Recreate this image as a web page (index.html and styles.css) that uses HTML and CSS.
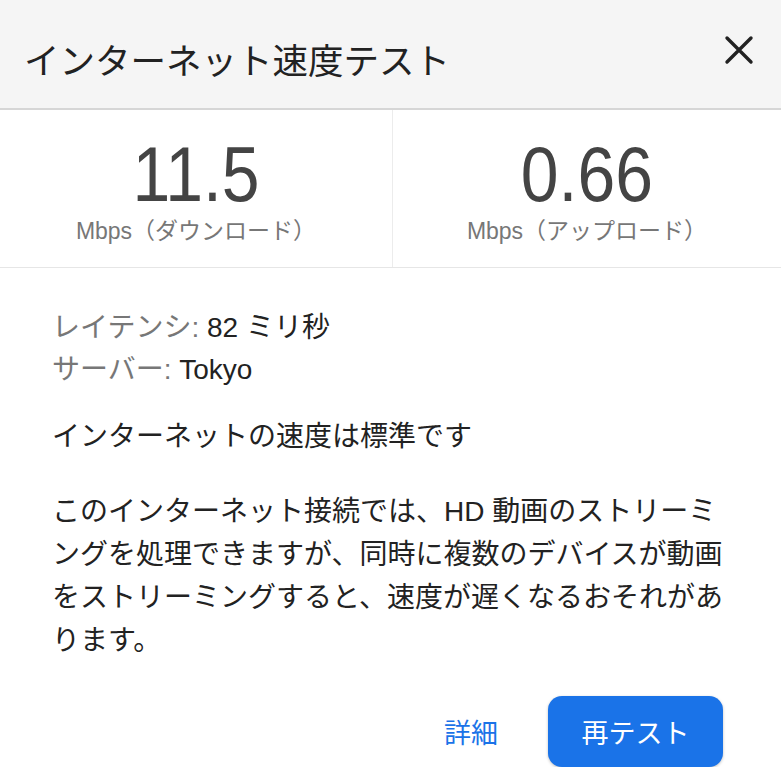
FILE: index.html
```html
<!DOCTYPE html>
<html lang="ja">
<head>
    <meta charset="UTF-8">
    <meta name="viewport" content="width=device-width, initial-scale=1.0">
    <title>インターネット速度テスト</title>
    <link rel="stylesheet" href="styles.css">
</head>
<body>

<div class="header">
    <h1 class="title">インターネット速度テスト</h1>
    <button class="close" aria-label="閉じる">
        <svg width="30" height="30" viewBox="0 0 30 30">
            <path d="M3 3 L27 27 M27 3 L3 27" stroke="#222" stroke-width="3.4" stroke-linecap="round" fill="none"/>
        </svg>
    </button>
</div>

<div class="metrics">
    <div class="metric">
        <div class="value">11.5</div>
        <div class="unit">Mbps（ダウンロード）</div>
    </div>
    <div class="metric">
        <div class="value">0.66</div>
        <div class="unit">Mbps（アップロード）</div>
    </div>
</div>

<div class="details">
    <div class="info">
        <div><span class="label">レイテンシ:</span> 82 ミリ秒</div>
        <div><span class="label">サーバー:</span> Tokyo</div>
    </div>
    <p class="summary">インターネットの速度は標準です</p>
    <p class="desc">このインターネット接続では、HD 動画のストリーミングを処理できますが、同時に複数のデバイスが動画をストリーミングすると、速度が遅くなるおそれがあります。</p>
</div>

<div class="actions">
    <a class="link" href="#">詳細</a>
    <button class="retest">再テスト</button>
</div>

</body>
</html>
```

FILE: styles.css
```css
body {
    margin: 0;
    width: 781px;
    background-color: #ffffff;
    color: #222;
    font-family: "Liberation Sans", Arial, "Noto Sans CJK JP", sans-serif;
}
.header {
    display: flex;
    align-items: center;
    justify-content: space-between;
    height: 108px;
    padding: 0 27px 0 24px;
    background-color: #f5f5f5;
    border-bottom: 2px solid #d6d6d6;
}
.title {
    margin: 8px 0 0 0;
    font-size: 35.5px;
    font-weight: normal;
    color: #222;
}
.close {
    display: flex;
    padding: 0;
    margin-top: -8px;
    background: none;
    border: none;
}
.metrics {
    display: flex;
    height: 157px;
    border-bottom: 1px solid #e6e6e6;
}
.metric {
    flex: 1;
    display: flex;
    flex-direction: column;
    align-items: center;
    padding-top: 20px;
}
.metric:first-child {
    flex: 0 0 392px;
    border-right: 1px solid #ececec;
}
.value {
    font-size: 78px;
    line-height: 88px;
    color: #444;
    transform: scaleX(0.87);
}
.unit {
    font-size: 23px;
    line-height: 27px;
    color: #777;
}
.details {
    padding: 39px 52px 0 52px;
    font-size: 28px;
}
.info {
    line-height: 42px;
}
.label {
    color: #777;
}
.summary {
    margin: 25px 0 0 0;
    line-height: 42px;
}
.desc {
    margin: 32px 0 0 0;
    line-height: 43px;
}
.actions {
    display: flex;
    justify-content: flex-end;
    align-items: center;
    gap: 50px;
    padding: 34px 58px 0 0;
}
.link {
    color: #1a73e8;
    text-decoration: none;
    font-size: 27px;
}
.retest {
    width: 175px;
    height: 71px;
    background-color: #1a73e8;
    color: #fff;
    border: none;
    border-radius: 14px;
    font-family: inherit;
    font-size: 27px;
    box-shadow: 0 1px 3px rgba(0, 0, 0, 0.25);
}
```
